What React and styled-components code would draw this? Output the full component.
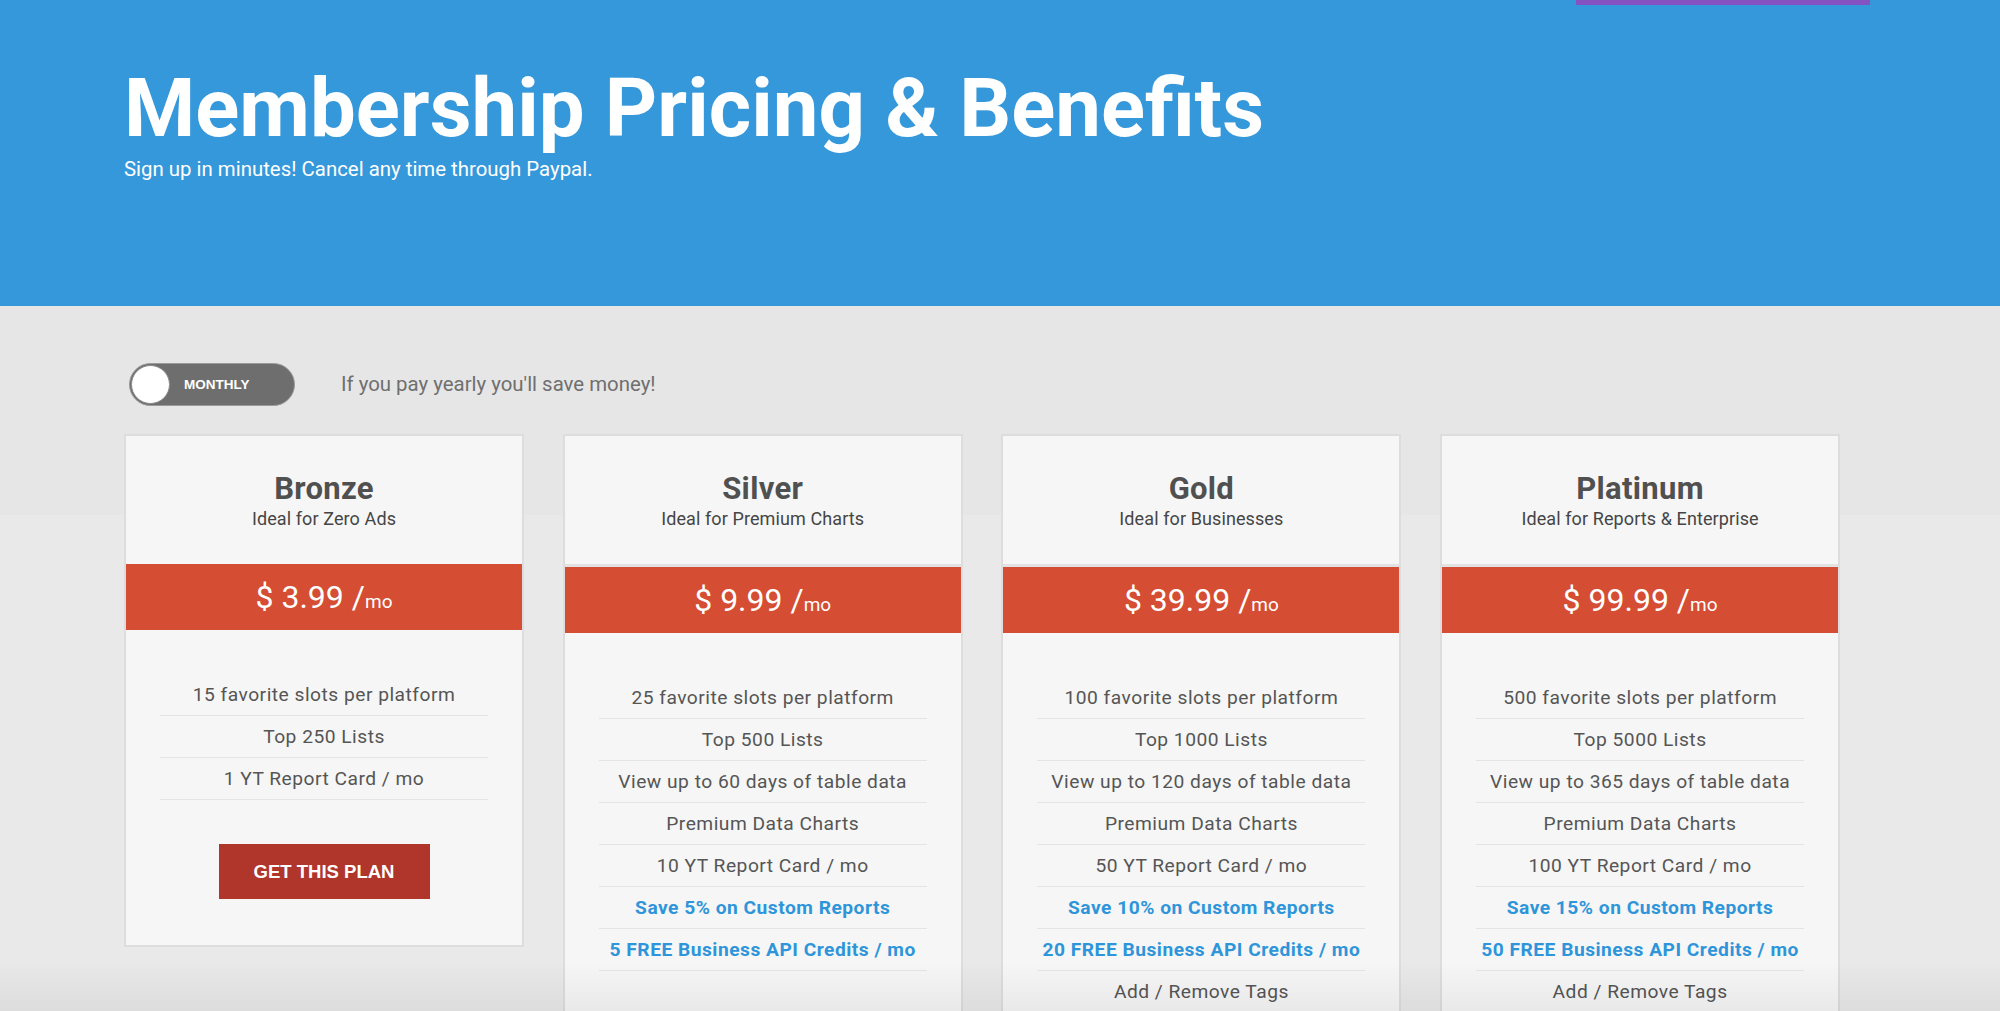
import React from "react";
import styled, { createGlobalStyle } from "styled-components";

const GlobalStyle = createGlobalStyle`
  html { scrollbar-width: none; }
  html::-webkit-scrollbar { display: none; }
  body {
    margin: 0;
    font-family: Roboto, "Liberation Sans", sans-serif;
    background: #e9e9ea;
  }
`;

const Header = styled.header`
  background: #3598db;
  height: 306px;
`;

const TopBar = styled.div`
  display: flex;
  justify-content: flex-end;
  padding-right: 130px;
  height: 5px;
`;

const MenuEdge = styled.div`
  width: 294px;
  height: 5px;
  background: #8553c1;
`;

const Container = styled.div`
  width: 1752px;
  margin: 0 auto;
`;

const Title = styled.h1`
  margin: 63px 0 0;
  font-size: 81.5px;
  line-height: 1;
  font-weight: 700;
  color: #fff;
`;

const Lead = styled.p`
  margin: 9px 0 0;
  font-size: 20.4px;
  line-height: 1;
  color: #fff;
`;

const Main = styled.main`
  background: linear-gradient(#e6e6e6 0, #e6e6e6 209px, #e9e9ea 209px);
  padding: 57px 0 80px;
`;

const ToggleRow = styled.div`
  display: flex;
  align-items: center;
  height: 43px;
  padding-left: 5px;
`;

const Toggle = styled.div`
  box-sizing: border-box;
  width: 166px;
  height: 43px;
  border-radius: 22px;
  background: #6e6e6e;
  border: 1px solid #9a9a9a;
  display: flex;
  align-items: center;
  padding-left: 1px;
`;

const Knob = styled.span`
  box-sizing: border-box;
  width: 39px;
  height: 39px;
  border-radius: 50%;
  background: #fff;
  border: 1px solid #8a8a8a;
`;

const ToggleLabel = styled.span`
  margin-left: 14px;
  font-family: "Liberation Sans", Arial, sans-serif;
  font-weight: 700;
  font-size: 13.5px;
  color: #fff;
`;

const Hint = styled.span`
  margin-left: 46px;
  font-size: 20.4px;
  line-height: 1;
  color: #6f6f6f;
`;

const Cards = styled.div`
  display: grid;
  grid-template-columns: repeat(4, 400px);
  column-gap: 38.7px;
  align-items: start;
  margin-top: 28px;
`;

const Card = styled.section`
  box-sizing: border-box;
  border: 2px solid #dddddd;
  background: #f6f6f6;
  padding-bottom: 46px;
`;

const CardHead = styled.div`
  padding: 37px 20px 36px;
  text-align: center;
`;

const PlanName = styled.h2`
  margin: 0;
  font-size: 31px;
  letter-spacing: 0.3px;
  line-height: 1;
  font-weight: 700;
  color: #505050;
`;

const PlanTag = styled.div`
  margin-top: 6px;
  font-size: 18px;
  letter-spacing: 0.1px;
  line-height: 1;
  color: #454545;
`;

const PriceBar = styled.div`
  border-top: ${(p) => (p.$edge ? "3px solid #e2e2e2" : "none")};
  background: #d54d33;
  height: 66px;
  line-height: 66px;
  text-align: center;
  color: #fff;
  font-size: 32px;
`;

const Per = styled.span`
  font-size: 19px;
`;

const Features = styled.ul`
  list-style: none;
  margin: 44px 34px 0;
  padding: 0;
`;

const Feature = styled.li`
  padding: 8px 0;
  line-height: 25px;
  font-size: 19.2px;
  letter-spacing: 0.5px;
  text-align: center;
  border-bottom: 1px solid #e4e4e4;
  color: ${(p) => (p.$accent ? "#2e95da" : "#555555")};
  font-weight: ${(p) => (p.$accent ? 700 : 400)};
`;

const BuyButton = styled.button`
  display: block;
  margin: 44px auto 0;
  width: 211px;
  height: 55px;
  border: none;
  background: #b0352a;
  color: #fff;
  font-family: "Liberation Sans", Arial, sans-serif;
  font-weight: 700;
  font-size: 18.5px;
  cursor: pointer;
`;

const BottomFade = styled.div`
  position: fixed;
  left: 0;
  right: 0;
  bottom: 0;
  height: 50px;
  pointer-events: none;
  background: linear-gradient(rgba(0, 0, 0, 0), rgba(0, 0, 0, 0.05));
`;

const plans = [
  {
    name: "Bronze",
    tag: "Ideal for Zero Ads",
    price: "3.99",
    edge: false,
    features: [
      ["15 favorite slots per platform"],
      ["Top 250 Lists"],
      ["1 YT Report Card / mo"],
    ],
  },
  {
    name: "Silver",
    tag: "Ideal for Premium Charts",
    price: "9.99",
    edge: true,
    features: [
      ["25 favorite slots per platform"],
      ["Top 500 Lists"],
      ["View up to 60 days of table data"],
      ["Premium Data Charts"],
      ["10 YT Report Card / mo"],
      ["Save 5% on Custom Reports", true],
      ["5 FREE Business API Credits / mo", true],
    ],
  },
  {
    name: "Gold",
    tag: "Ideal for Businesses",
    price: "39.99",
    edge: true,
    features: [
      ["100 favorite slots per platform"],
      ["Top 1000 Lists"],
      ["View up to 120 days of table data"],
      ["Premium Data Charts"],
      ["50 YT Report Card / mo"],
      ["Save 10% on Custom Reports", true],
      ["20 FREE Business API Credits / mo", true],
      ["Add / Remove Tags"],
    ],
  },
  {
    name: "Platinum",
    tag: "Ideal for Reports & Enterprise",
    price: "99.99",
    edge: true,
    features: [
      ["500 favorite slots per platform"],
      ["Top 5000 Lists"],
      ["View up to 365 days of table data"],
      ["Premium Data Charts"],
      ["100 YT Report Card / mo"],
      ["Save 15% on Custom Reports", true],
      ["50 FREE Business API Credits / mo", true],
      ["Add / Remove Tags"],
    ],
  },
];

export default function App() {
  return (
    <>
      <GlobalStyle />
      <Header>
        <TopBar>
          <MenuEdge />
        </TopBar>
        <Container>
          <Title>Membership Pricing &amp; Benefits</Title>
          <Lead>Sign up in minutes! Cancel any time through Paypal.</Lead>
        </Container>
      </Header>
      <Main>
        <Container>
          <ToggleRow>
            <Toggle>
              <Knob />
              <ToggleLabel>MONTHLY</ToggleLabel>
            </Toggle>
            <Hint>If you pay yearly you'll save money!</Hint>
          </ToggleRow>
          <Cards>
            {plans.map((plan) => (
              <Card key={plan.name}>
                <CardHead>
                  <PlanName>{plan.name}</PlanName>
                  <PlanTag>{plan.tag}</PlanTag>
                </CardHead>
                <PriceBar $edge={plan.edge}>
                  $ {plan.price} /<Per>mo</Per>
                </PriceBar>
                <Features>
                  {plan.features.map(([text, accent]) => (
                    <Feature key={text} $accent={accent}>
                      {text}
                    </Feature>
                  ))}
                </Features>
                <BuyButton>GET THIS PLAN</BuyButton>
              </Card>
            ))}
          </Cards>
        </Container>
      </Main>
      <BottomFade />
    </>
  );
}
